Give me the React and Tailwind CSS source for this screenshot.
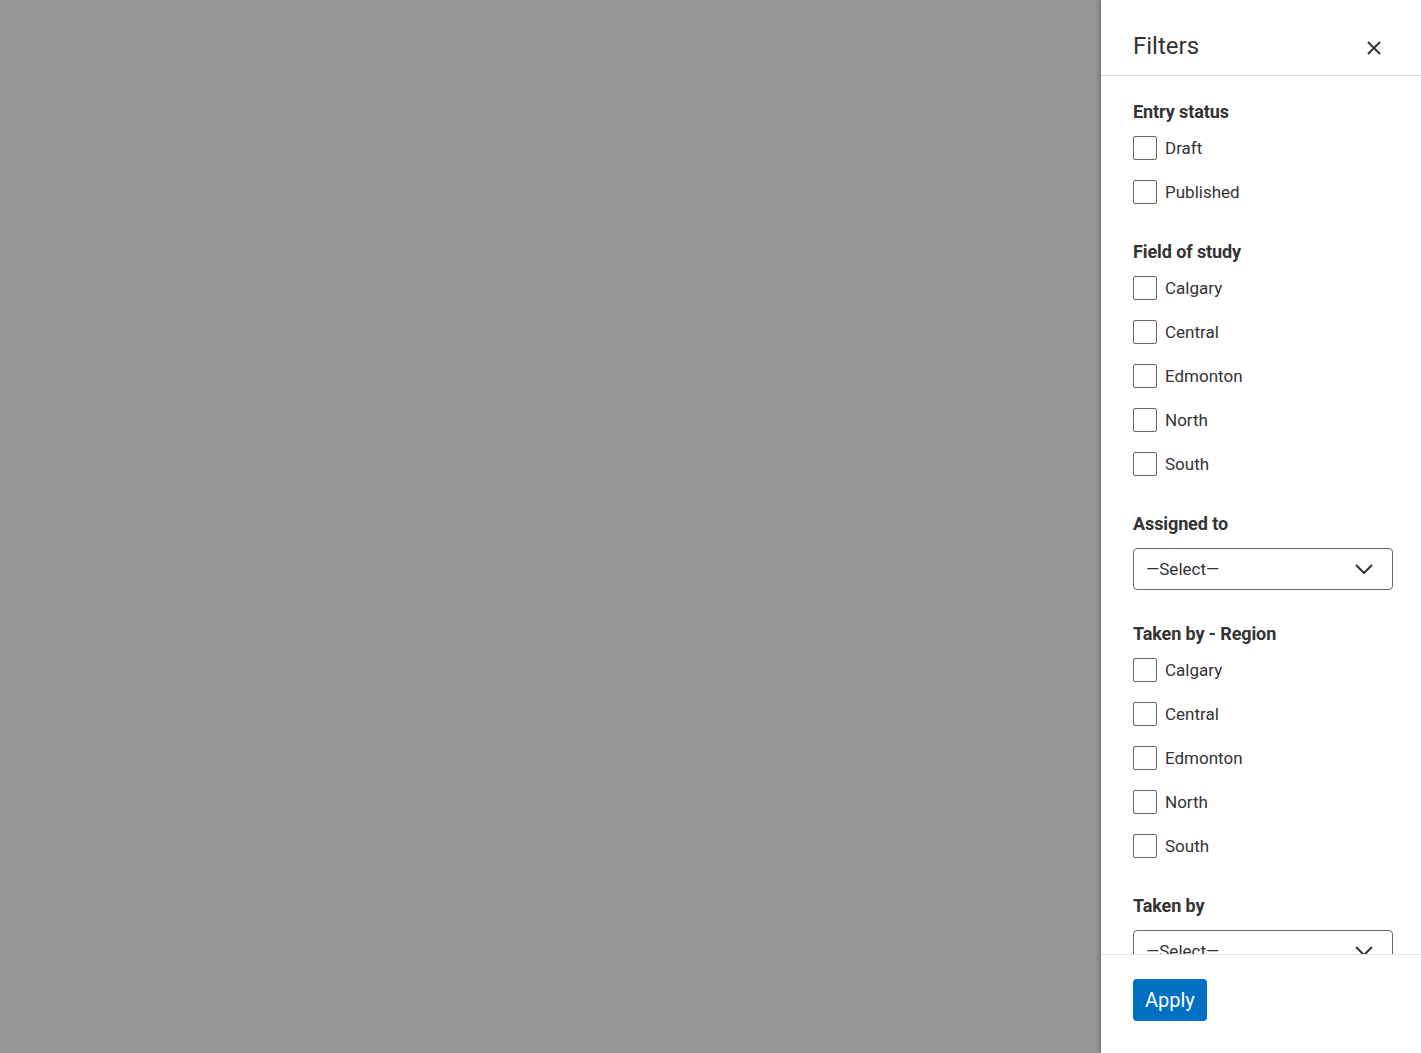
import React, { useState } from "react";

const regions = ["Calgary", "Central", "Edmonton", "North", "South"];

const Checkbox = ({ label }) => {
  const [checked, setChecked] = useState(false);
  return (
    <label className="flex items-center h-[44px] cursor-pointer">
      <span
        onClick={() => setChecked(!checked)}
        className="w-6 h-6 border border-[#666666] rounded-[2px] bg-white flex items-center justify-center"
      >
        {checked && (
          <svg width="16" height="16" viewBox="0 0 16 16" fill="none">
            <path d="M3 8l3 3 7-7" stroke="#333" strokeWidth="2" />
          </svg>
        )}
      </span>
      <span className="ml-2 text-[17px] text-[#333333] leading-none">{label}</span>
    </label>
  );
};

const Select = () => (
  <div className="pt-[10px] pb-[6px]">
    <div className="h-[42px] w-[260px] border border-[#666666] rounded-[4px] bg-white flex items-center justify-between pl-3 pr-[19px]">
      <span className="text-[17px] text-[#333333] pt-[2px]">—Select—</span>
      <svg width="18" height="10" viewBox="0 0 18 10" fill="none">
        <path d="M1 1l8 8 8-8" stroke="#333333" strokeWidth="2" />
      </svg>
    </div>
  </div>
);

const Section = ({ title, children }) => (
  <div className="pb-6">
    <h3 className="text-[18px] font-bold text-[#333333] leading-[28px] tracking-[-0.1px]">{title}</h3>
    {children}
  </div>
);

export default function App() {
  return (
    <div
      className="h-[1053px] w-full bg-[#979797] flex justify-end overflow-hidden"
      style={{ fontFamily: "Roboto, 'Liberation Sans', sans-serif" }}
    >
      <aside className="w-[320px] h-full bg-white flex flex-col shadow-[-2px_0_4px_rgba(0,0,0,0.25)]">
        <div className="h-[76px] shrink-0 border-b border-[#dddddd] flex items-center justify-between pt-4 pl-8 pr-[40px]">
          <h2 className="text-[24px] text-[#333333] font-normal">Filters</h2>
          <button className="w-[14px] h-[14px] mt-[4px] flex items-center justify-center">
            <svg width="14" height="14" viewBox="0 0 14 14" fill="none">
              <path d="M1 1l12 12M13 1L1 13" stroke="#333333" strokeWidth="2" />
            </svg>
          </button>
        </div>

        <div className="flex-1 overflow-hidden pl-8 pr-7 pt-[22px]">
          <Section title="Entry status">
            <Checkbox label="Draft" />
            <Checkbox label="Published" />
          </Section>
          <Section title="Field of study">
            {regions.map((r) => (
              <Checkbox key={"f" + r} label={r} />
            ))}
          </Section>
          <Section title="Assigned to">
            <Select />
          </Section>
          <Section title="Taken by - Region">
            {regions.map((r) => (
              <Checkbox key={"t" + r} label={r} />
            ))}
          </Section>
          <Section title="Taken by">
            <Select />
          </Section>
        </div>

        <div className="shrink-0 border-t border-[#e6e6e6] pt-6 pb-8 pl-8">
          <button className="h-[42px] px-3 rounded-[4px] bg-[#0070c4] text-white text-[20px]">
            Apply
          </button>
        </div>
      </aside>
    </div>
  );
}
